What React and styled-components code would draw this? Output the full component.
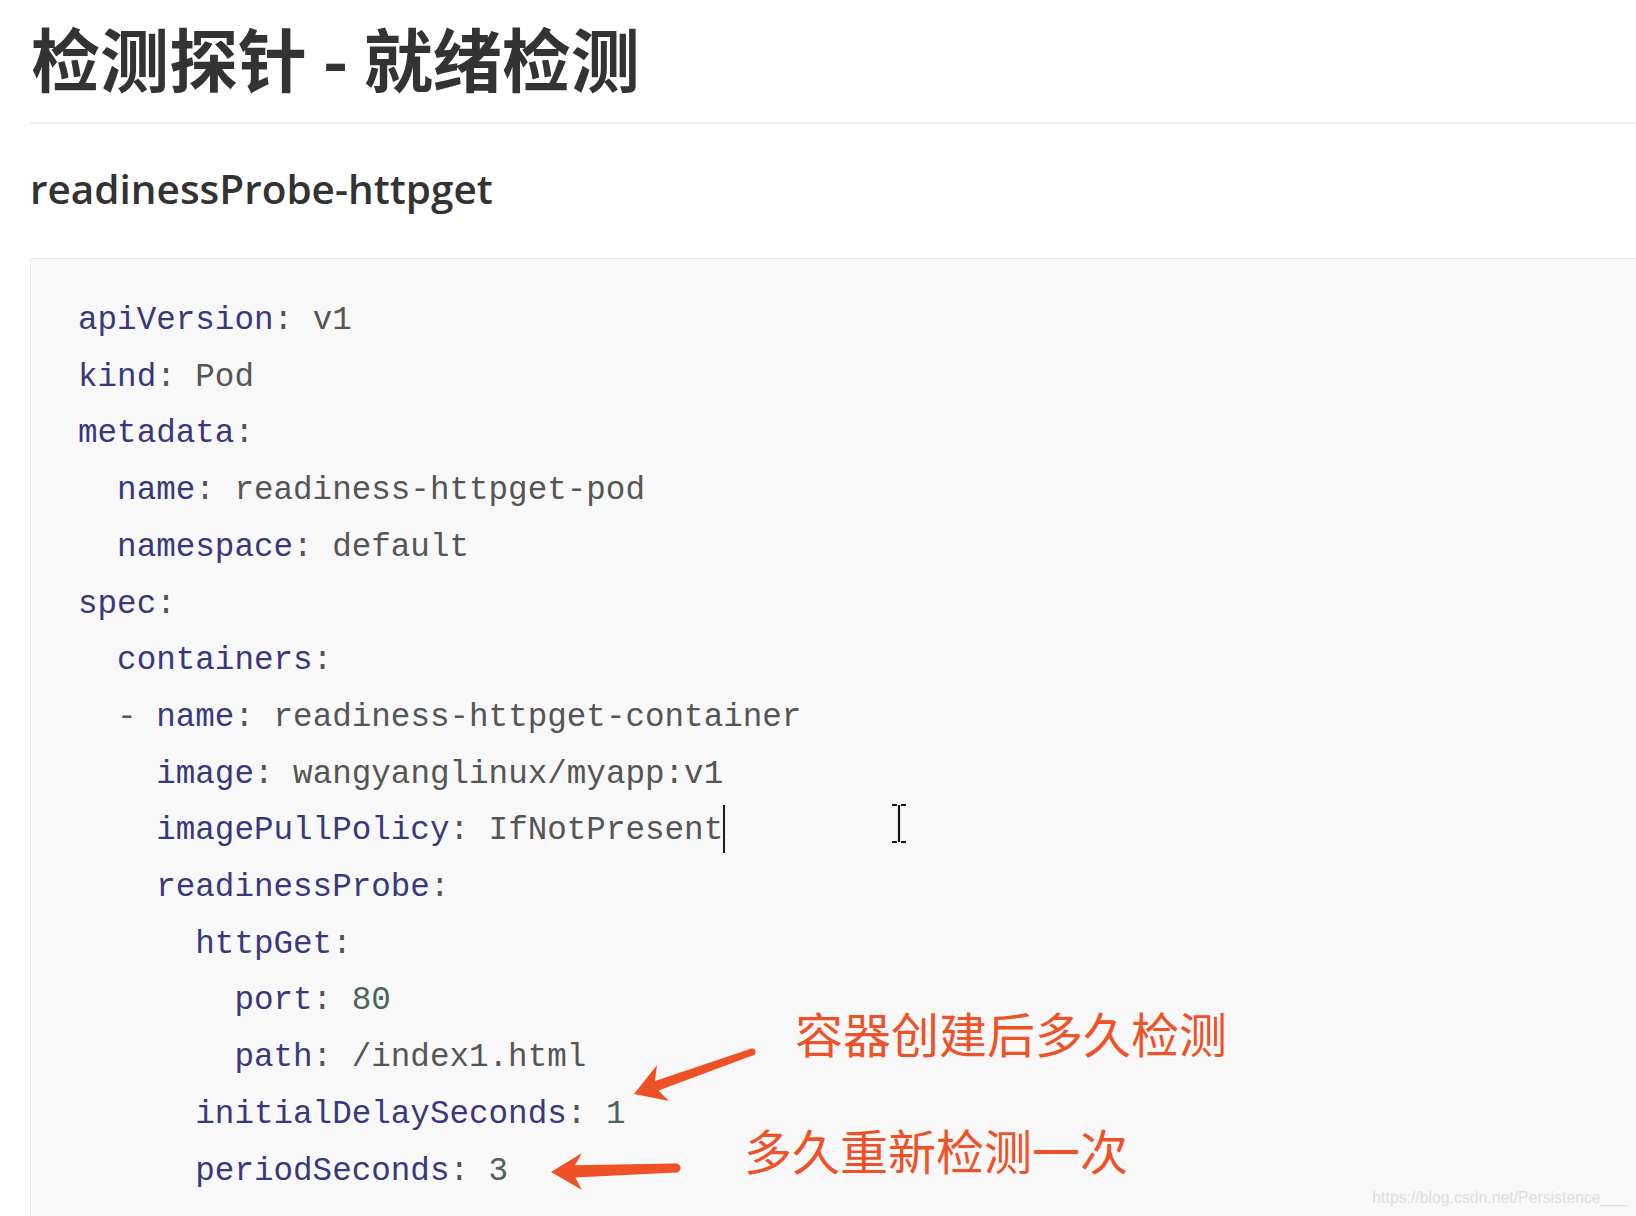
import styled, { createGlobalStyle } from 'styled-components'

const GlobalStyle = createGlobalStyle`
  html, body {
    margin: 0;
    padding: 0;
    background: #ffffff;
    overflow: hidden;
  }
`

const Page = styled.div`
  position: relative;
  box-sizing: border-box;
  height: 1216px;
  padding-left: 30px;
  overflow: hidden;
`

const Title = styled.h1`
  margin: 0;
  padding: 17px 0 24px 1px;
  border-bottom: 2px solid #eeeeee;
  font-family: 'Noto Sans CJK SC', sans-serif;
  font-weight: 700;
  font-size: 69px;
  line-height: 81px;
  color: #333333;
  white-space: nowrap;
`

const SubTitle = styled.h3`
  margin: 39px 0 0;
  font-family: 'Open Sans', sans-serif;
  font-weight: 600;
  font-size: 40.5px;
  line-height: 52px;
  color: #333333;
  white-space: nowrap;
`

const CodeBlock = styled.pre`
  margin: 43px -4px 0 0;
  padding: 34px 48px 60px 47px;
  border: 1px solid #e7eaed;
  background: #f8f8f8;
  font-family: 'Liberation Mono', monospace;
  font-size: 32.6px;
  line-height: 56.7px;
  color: #555555;
`

const Line = styled.div`
  white-space: pre;
`

const Tok = styled.span`
  color: ${props =>
    props.kind === 'k' ? '#38387c' : props.kind === 'n' ? '#4a655c' : '#555555'};
`

const Caret = styled.span`
  display: inline-block;
  width: 2px;
  height: 48px;
  vertical-align: -14px;
  background: #1e1e1e;
`

const Note = styled.div`
  position: absolute;
  left: ${props => props.left}px;
  top: ${props => props.top}px;
  font-family: 'Noto Sans CJK SC', sans-serif;
  font-weight: 400;
  font-size: 48px;
  line-height: 48px;
  color: #ee5228;
  white-space: nowrap;
`

const Overlay = styled.svg`
  position: absolute;
  left: 0;
  top: 0;
  pointer-events: none;
`

const Watermark = styled.div`
  position: absolute;
  right: 9px;
  top: 1189px;
  font-family: 'Liberation Sans', Arial, sans-serif;
  font-size: 15.8px;
  line-height: 18px;
  color: #dedede;
`

const lines = [
  [0, [['k', 'apiVersion'], ['p', ': '], ['v', 'v1']]],
  [0, [['k', 'kind'], ['p', ': '], ['v', 'Pod']]],
  [0, [['k', 'metadata'], ['p', ':']]],
  [2, [['k', 'name'], ['p', ': '], ['v', 'readiness-httpget-pod']]],
  [2, [['k', 'namespace'], ['p', ': '], ['v', 'default']]],
  [0, [['k', 'spec'], ['p', ':']]],
  [2, [['k', 'containers'], ['p', ':']]],
  [2, [['p', '- '], ['k', 'name'], ['p', ': '], ['v', 'readiness-httpget-container']]],
  [4, [['k', 'image'], ['p', ': '], ['v', 'wangyanglinux/myapp:v1']]],
  [4, [['k', 'imagePullPolicy'], ['p', ': '], ['v', 'IfNotPresent']], true],
  [4, [['k', 'readinessProbe'], ['p', ':']]],
  [6, [['k', 'httpGet'], ['p', ':']]],
  [8, [['k', 'port'], ['p', ': '], ['n', '80']]],
  [8, [['k', 'path'], ['p', ': '], ['v', '/index1.html']]],
  [6, [['k', 'initialDelaySeconds'], ['p', ': '], ['n', '1']]],
  [6, [['k', 'periodSeconds'], ['p', ': '], ['n', '3']]]
]

const App = () => {
  return (
    <Page>
      <GlobalStyle />
      <Title>检测探针 - 就绪检测</Title>
      <SubTitle>readinessProbe-httpget</SubTitle>
      <CodeBlock>
        {lines.map(([indent, toks, caret], i) => (
          <Line key={i}>
            {' '.repeat(indent)}
            {toks.map(([kind, text], j) => (
              <Tok key={j} kind={kind}>
                {text}
              </Tok>
            ))}
            {caret && <Caret />}
          </Line>
        ))}
      </CodeBlock>

      <Note left={795} top={1008}>容器创建后多久检测</Note>
      <Note left={744} top={1125}>多久重新检测一次</Note>

      <Overlay width='1636' height='1216' viewBox='0 0 1636 1216'>
        {/* text cursor (I-beam) */}
        <g stroke='#151515' strokeWidth='2.2' fill='none'>
          <line x1='899' y1='805' x2='899' y2='842' />
          <path d='M892 805 H897 M901 805 H906 M892 842 H897 M901 842 H906' />
        </g>
        {/* arrow 1 */}
        <path
          fill='#ef5126'
          d='M634 1094 L657 1065 L655 1081 L750.8 1048.7 L753.2 1055.3 L658.5 1090.5 L669 1101 Z'
        />
        <circle cx='752' cy='1052' r='3.5' fill='#ef5126' />
        {/* arrow 2 */}
        <path
          fill='#ef5126'
          d='M551 1172 L582 1153 L575 1165.2 L675.9 1163.5 L676.1 1172.5 L575.2 1177.4 L582 1190 Z'
        />
        <circle cx='676' cy='1168' r='4.5' fill='#ef5126' />
      </Overlay>

      <Watermark>https://blog.csdn.net/Persistence___</Watermark>
    </Page>
  )
}

export default App
